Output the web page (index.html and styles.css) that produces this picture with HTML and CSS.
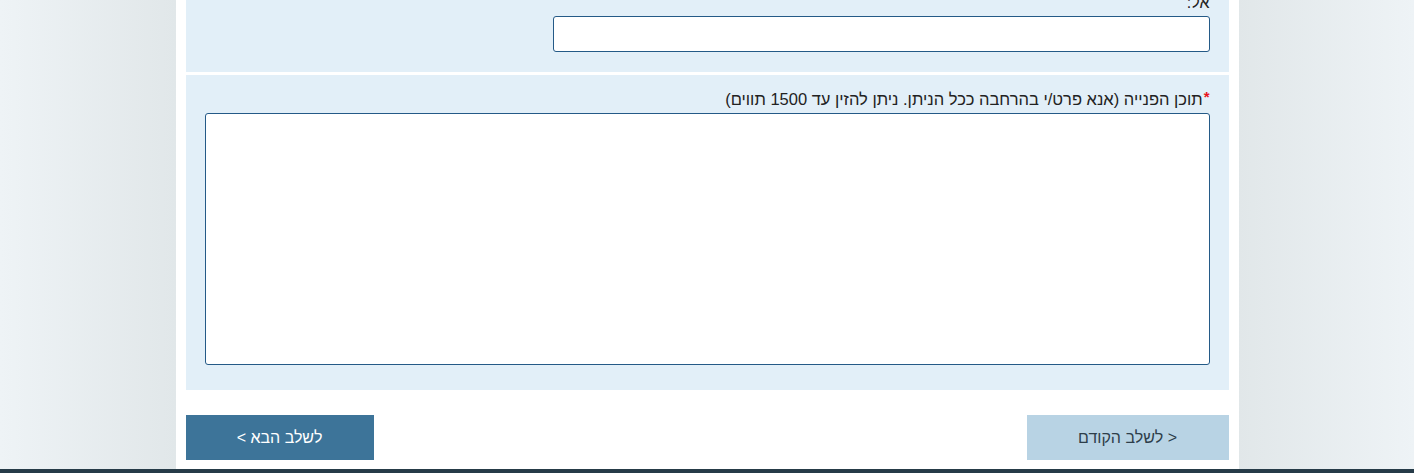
FILE: index.html
```html
<!DOCTYPE html>
<html lang="he" dir="rtl">
<head>
<meta charset="utf-8">
<title>טופס פנייה</title>
<link rel="stylesheet" href="styles.css">
</head>
<body>
<div class="page">
  <main class="container">
    <section class="panel panel-to">
      <label class="label" for="to">אל:</label>
      <input class="input" id="to" type="text">
    </section>
    <section class="panel panel-content">
      <label class="label" for="content"><span class="req">*</span>תוכן הפנייה (אנא פרט/י בהרחבה ככל הניתן. ניתן להזין עד 1500 תווים)</label>
      <textarea class="textarea" id="content"></textarea>
    </section>
    <div class="actions">
      <button class="btn btn-prev" type="button">&lt; לשלב הקודם</button>
      <button class="btn btn-next" type="button">לשלב הבא &gt;</button>
    </div>
  </main>
  <footer class="footer"></footer>
</div>
</body>
</html>
```
FILE: styles.css
```css
html, body {
  margin: 0;
  padding: 0;
  height: 100%;
  overflow: hidden;
}
body {
  font-family: "Liberation Sans", Arial, sans-serif;
  font-size: 16px;
  color: #222;
  background: linear-gradient(90deg, #eef3f6 0px, #e1e7e9 176px, #e1e7e9 calc(100% - 176px), #eef3f6 100%);
}
.page {
  display: flex;
  flex-direction: column;
  margin-top: -16px;
}
.container {
  width: 1043px;
  margin: 0 auto;
  padding: 0 10px 9px;
  background: #fff;
  display: flex;
  flex-direction: column;
}
.panel {
  background: #e2eff8;
  display: flex;
  flex-direction: column;
  align-items: flex-start;
  padding: 15px 19px 25px;
}
.panel-to {
  padding-top: 10px;
  padding-bottom: 20px;
  margin-bottom: 3px;
}
.label {
  line-height: 18px;
  margin-bottom: 4px;
}
.panel-content .label {
  font-size: 16.5px;
  line-height: 19px;
  margin-bottom: 4px;
}
.req {
  color: #e8141c;
  font-size: 15px;
  font-weight: bold;
  vertical-align: top;
  line-height: 13px;
  margin-left: 1px;
}
.input {
  box-sizing: border-box;
  width: 657px;
  height: 36px;
  border: 1px solid #245a87;
  border-radius: 3px;
  background: #fff;
  font: inherit;
  padding: 4px 8px;
}
.textarea {
  box-sizing: border-box;
  width: 100%;
  height: 252px;
  border: 1px solid #245a87;
  border-radius: 3px;
  background: #fff;
  font: inherit;
  resize: none;
  padding: 6px 8px;
}
.actions {
  display: flex;
  justify-content: space-between;
  margin-top: 25px;
}
.btn {
  height: 45px;
  border: none;
  border-radius: 0;
  font-family: "Liberation Sans", Arial, sans-serif;
  font-size: 16px;
  cursor: pointer;
}
.btn-prev {
  width: 202px;
  background: #b8d3e4;
  color: #2e3e4a;
}
.btn-next {
  width: 188px;
  background: #3d7499;
  color: #fff;
}
.footer {
  height: 20px;
  background: #263b48;
}
```
